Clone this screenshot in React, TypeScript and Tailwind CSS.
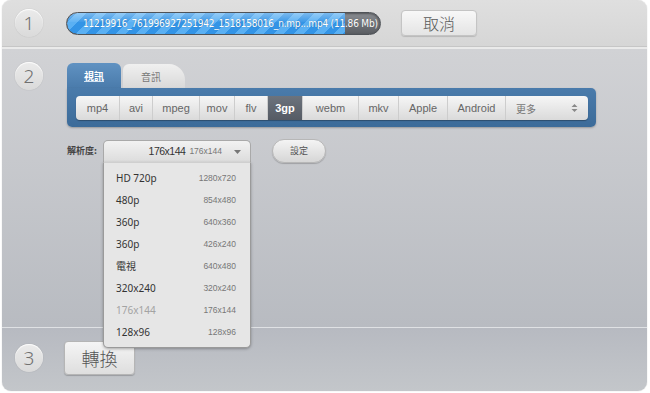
import React from "react";

const formats = [
  { n: "mp4", w: 43 },
  { n: "avi", w: 33 },
  { n: "mpeg", w: 47 },
  { n: "mov", w: 35 },
  { n: "flv", w: 33 },
  { n: "3gp", w: 35, sel: true },
  { n: "webm", w: 56 },
  { n: "mkv", w: 40 },
  { n: "Apple", w: 49 },
  { n: "Android", w: 58 },
];

const res = [
  ["HD 720p", "1280x720"],
  ["480p", "854x480"],
  ["360p", "640x360"],
  ["360p", "426x240"],
  ["電視", "640x480"],
  ["320x240", "320x240"],
  ["176x144", "176x144", true],
  ["128x96", "128x96"],
] as const;

function Num({ n }: { n: string }) {
  return (
    <div className="w-[28px] h-[28px] rounded-full bg-[linear-gradient(#ebebeb,#dadada)] shadow-[inset_0_1px_1px_rgba(255,255,255,0.9),0_0_1px_rgba(0,0,0,0.25)] flex items-center justify-center text-[19px] leading-none text-[#707070] font-['Noto_Sans',sans-serif] font-light shrink-0">
      {n}
    </div>
  );
}

export default function App() {
  return (
    <div className="w-[650px] h-[393px] bg-white pl-[2px] pr-[3px] font-['Noto_Sans','Noto_Sans_CJK_TC',sans-serif]">
      <div className="h-[391px] rounded-[9px] overflow-hidden flex flex-col shadow-[0_0_1px_rgba(0,0,0,0.3)]">
        {/* Row 1 */}
        <div className="h-[47px] shrink-0 bg-[linear-gradient(#dfdfdf,#d6d6d6)] flex items-center pl-[13px] border-b border-[#c6c6c6]">
          <Num n="1" />
          <div className="ml-[23px] w-[315px] h-[23px] rounded-full border border-[#4f5358] bg-[linear-gradient(#8a8d92,#5a5d62)] relative overflow-hidden shadow-[inset_0_1px_2px_rgba(0,0,0,0.4)]">
            <div className="absolute left-0 top-0 bottom-0 w-[278px] rounded-l-full bg-[repeating-linear-gradient(135deg,#3394e6_0px,#3394e6_7px,#5ab0f3_7px,#5ab0f3_14px)]">
              <div className="absolute inset-x-0 top-0 h-[9px] bg-[linear-gradient(rgba(255,255,255,0.35),rgba(255,255,255,0.05))]" />
            </div>
            <div className="absolute inset-0 flex items-center pl-[16px] text-[10px] text-white font-['DejaVu_Sans_Condensed','DejaVu_Sans',sans-serif] tracking-[-0.2px] whitespace-nowrap [text-shadow:0_0_1px_rgba(0,0,0,0.3)]">
              11219916_761996927251942_1518158016_n.mp...mp4 (11.86 Mb)
            </div>
          </div>
          <div className="ml-[20px] w-[76px] h-[26px] rounded-[4px] bg-[linear-gradient(#f8f8f8,#e4e4e4)] border border-[#c4c4c4] shadow-[0_1px_1px_rgba(0,0,0,0.15)] flex items-center justify-center text-[16px] text-[#5a5a5a] font-light font-['Noto_Sans_CJK_TC',sans-serif]">
            取消
          </div>
        </div>
        <div className="h-[2px] shrink-0 bg-[#eaeaea]" />

        {/* Row 2 */}
        <div className="h-[279px] shrink-0 bg-[linear-gradient(#d1d2d5,#b8bbc1)] flex pl-[13px] pt-[13px] relative border-b border-[#dfe1e4]">
          <Num n="2" />
          <div className="ml-[24px] flex flex-col pt-[1px]">
            {/* tabs */}
            <div className="flex items-end h-[25px]">
              <div className="w-[54px] h-[25px] rounded-t-[6px] bg-[linear-gradient(#6092c2,#4a7bab)] flex items-center justify-center text-[10px] font-bold text-white font-['Noto_Sans_CJK_TC',sans-serif] underline decoration-[#cfe0f0]">
                視訊
              </div>
              <div className="ml-[2px] w-[62px] h-[24px] rounded-tl-[6px] rounded-tr-[16px] bg-[linear-gradient(#f0f0f0,#d9d9d9)] flex items-center justify-center text-[10px] text-[#777] font-['Noto_Sans_CJK_TC',sans-serif] pr-[6px]">
                音訊
              </div>
            </div>
            <div className="w-[529px] h-[39px] rounded-b-[5px] rounded-tr-[5px] bg-[linear-gradient(#4a7bab,#3c6b99)] pl-[9px] pr-[8px] pt-[8px] shadow-[0_1px_2px_rgba(0,0,0,0.25)]">
              <div className="h-[24px] rounded-[4px] bg-[linear-gradient(#f6f6f6,#dadada)] flex overflow-hidden shadow-[0_1px_1px_rgba(0,0,0,0.3)]">
                {formats.map((f, i) => (
                  <div
                    key={f.n}
                    style={{ width: f.w }}
                    className={
                      "h-full flex items-center justify-center text-[11px] font-['Liberation_Sans',sans-serif] " +
                      (i > 0 ? "border-l border-[#cdcdcd] " : "") +
                      (f.sel
                        ? "bg-[linear-gradient(#6c737d,#555b64)] text-white font-bold"
                        : "text-[#666]")
                    }
                  >
                    {f.n}
                  </div>
                ))}
                <div className="flex-1 border-l border-[#cdcdcd] flex items-center pl-[10px] pr-[10px] text-[10px] text-[#777] font-['Noto_Sans_CJK_TC',sans-serif]">
                  <span>更多</span>
                  <svg className="ml-auto" width="7" height="10" viewBox="0 0 7 10">
                    <path d="M3.5 1 L6.5 4 H0.5 Z M3.5 9 L6.5 6 H0.5 Z" fill="#8a8a8a" />
                  </svg>
                </div>
              </div>
            </div>

            {/* resolution row */}
            <div className="flex items-center mt-[12px] h-[24px]">
              <div className="w-[36px] text-[9px] text-[#444] font-bold font-['Noto_Sans_CJK_TC',sans-serif]">
                解析度:
              </div>
              <div className="relative w-[148px] h-[22px]">
                <div className="h-[22px] rounded-t-[5px] border border-[#a9a9a9] border-b-0 bg-[linear-gradient(#f2f2f2,#dcdcdc)] flex items-center justify-end pr-[9px] gap-[4px]">
                  <span className="text-[10.5px] tracking-[-0.5px] text-[#333] font-['Liberation_Sans',sans-serif]">176x144</span>
                  <span className="text-[8.5px] text-[#777] font-['Liberation_Sans',sans-serif]">176x144</span>
                  <svg className="ml-[8px]" width="7" height="4" viewBox="0 0 7 4">
                    <path d="M0 0 H7 L3.5 4 Z" fill="#777" />
                  </svg>
                </div>
                <div className="absolute left-0 top-[22px] w-[148px] h-[186px] bg-[#e6e6e6] border border-[#9a9a9a] border-t-[#cfcfcf] rounded-b-[5px] shadow-[0_1px_3px_rgba(0,0,0,0.3)] flex flex-col pt-[4px] pl-[12px] pr-[14px]">
                  {res.map(([a, b, dis], i) => (
                    <div key={i} className="h-[22px] flex items-center justify-between">
                      <span
                        className={
                          "text-[10px] font-['Noto_Sans','Noto_Sans_CJK_TC',sans-serif] " +
                          (dis ? "text-[#a3a3a3]" : "text-[#333]")
                        }
                      >
                        {a}
                      </span>
                      <span className="text-[8.5px] text-[#777] font-['Liberation_Sans',sans-serif]">{b}</span>
                    </div>
                  ))}
                </div>
              </div>
              <div className="ml-[21px] w-[54px] h-[24px] rounded-full bg-[linear-gradient(#f4f4f4,#d6d6d6)] border border-[#b7b7b7] shadow-[0_1px_1px_rgba(0,0,0,0.2)] flex items-center justify-center text-[9px] text-[#555] font-['Noto_Sans_CJK_TC',sans-serif]">
                設定
              </div>
            </div>
          </div>
        </div>

        {/* Row 3 */}
        <div className="flex-1 bg-[linear-gradient(#b7bac1,#c3c6ca)] flex items-center pl-[13px] pb-[3px]">
          <Num n="3" />
          <div className="ml-[21px] w-[71px] h-[34px] rounded-[4px] bg-[linear-gradient(#f5f5f5,#dedede)] border border-[#b5b5b5] shadow-[0_1px_1px_rgba(0,0,0,0.2)] flex items-center justify-center text-[18px] text-[#555] font-light font-['Noto_Sans_CJK_TC',sans-serif]">
            轉換
          </div>
        </div>
      </div>
    </div>
  );
}
